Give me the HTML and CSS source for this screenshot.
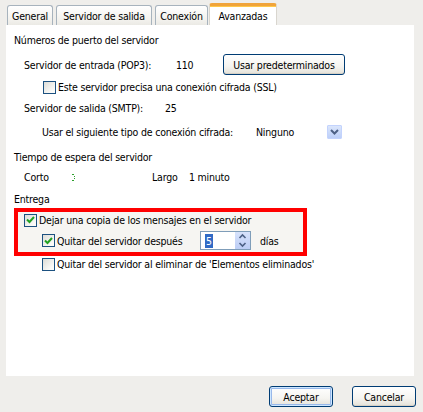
FILE: index.html
```html
<!DOCTYPE html>
<html lang="es">
<head>
<meta charset="utf-8">
<link rel="stylesheet" href="styles.css">
</head>
<body>
<div class="dialog">
  <div class="tabs">
    <div class="tab t-general">General</div>
    <div class="tab t-salida">Servidor de salida</div>
    <div class="tab t-conexion">Conexión</div>
    <div class="tab active t-avanz">Avanzadas</div>
  </div>
  <div class="panel">
    <div class="heading">Números de puerto del servidor</div>
    <div class="row row-pop">
      <span class="lbl-pop">Servidor de entrada (POP3):</span>
      <span class="val-pop">110</span>
      <button class="btn btn-defaults">Usar predeterminados</button>
    </div>
    <div class="row row-ssl">
      <span class="chk"></span>
      <span class="chk-label">Este servidor precisa una conexión cifrada (SSL)</span>
    </div>
    <div class="row row-smtp">
      <span class="lbl-smtp">Servidor de salida (SMTP):</span>
      <span>25</span>
    </div>
    <div class="row row-cifr">
      <span class="lbl-cifr">Usar el siguiente tipo de conexión cifrada:</span>
      <span class="val-cifr">Ninguno</span>
      <span class="dropbtn">
        <svg width="9" height="6" viewBox="0 0 9 6"><path d="M1 1 L4.5 4.5 L8 1" fill="none" stroke="#4d6185" stroke-width="2"/></svg>
      </span>
    </div>
    <div class="heading heading-time">Tiempo de espera del servidor</div>
    <div class="row row-time">
      <span class="lbl-corto">Corto</span>
      <span class="slider-mark">
        <svg width="3" height="7" viewBox="0 0 3 7"><rect x="0" y="0" width="2" height="1" fill="#2da02d"/><rect x="2" y="2" width="1" height="1" fill="#2da02d"/><rect x="2" y="4" width="1" height="1" fill="#2da02d"/><rect x="0" y="6" width="2" height="1" fill="#2da02d"/></svg>
      </span>
      <span class="lbl-largo">Largo</span>
      <span>1 minuto</span>
    </div>
    <div class="heading heading-entrega">Entrega</div>
    <div class="redbox">
      <div class="row row-dejar">
        <span class="chk checked"><svg width="9" height="8" viewBox="0 0 9 8"><path d="M1 3.5 L3.5 6 L8 1" fill="none" stroke="#21a121" stroke-width="2"/></svg></span>
        <span class="chk-label">Dejar una copia de los mensajes en el servidor</span>
      </div>
      <div class="row row-quitar">
        <span class="chk checked"><svg width="9" height="8" viewBox="0 0 9 8"><path d="M1 3.5 L3.5 6 L8 1" fill="none" stroke="#21a121" stroke-width="2"/></svg></span>
        <span class="chk-label lbl-quitar">Quitar del servidor después</span>
        <span class="spinner">
          <span class="spin-val"><span class="sel">5</span></span>
          <span class="spin-btns">
            <svg width="15" height="17" viewBox="0 0 15 17"><path d="M4.5 6 L7.5 3 L10.5 6" fill="none" stroke="#4d6185" stroke-width="1.6"/><path d="M4.5 11 L7.5 14 L10.5 11" fill="none" stroke="#4d6185" stroke-width="1.6"/></svg>
          </span>
        </span>
        <span class="lbl-dias">días</span>
      </div>
    </div>
    <div class="row row-elim">
      <span class="chk"></span>
      <span class="chk-label">Quitar del servidor al eliminar de 'Elementos eliminados'</span>
    </div>
  </div>
  <div class="footer">
    <button class="btn btn-default">Aceptar</button>
    <button class="btn">Cancelar</button>
  </div>
</div>
</body>
</html>
```

FILE: styles.css
```css
html, body {
  margin: 0;
  padding: 0;
}
body {
  background: #efeeeb;
  font-family: "DejaVu Sans Condensed", "DejaVu Sans", sans-serif;
  font-stretch: condensed;
  font-size: 10.5px;
  letter-spacing: -0.2px;
  color: #000;
}
.dialog {
  width: 423px;
  height: 412px;
  background: #efeeeb;
  box-sizing: border-box;
}
.tabs {
  display: flex;
  align-items: flex-end;
  height: 25px;
  padding-left: 7px;
  box-sizing: border-box;
}
.tab {
  box-sizing: border-box;
  height: 20px;
  line-height: 20px;
  text-align: center;
  border: 1px solid #a7b3bd;
  border-bottom: none;
  border-radius: 3px 3px 0 0;
  background: linear-gradient(#ffffff, #f3f2ee 70%, #ebeae5);
  white-space: nowrap;
}
.t-general { width: 46px; margin-right: 3px; }
.t-salida { width: 96px; margin-right: 3px; }
.t-conexion { width: 53px; margin-right: 1px; }
.t-avanz { width: 68px; }
.tab.active {
  height: 22px;
  line-height: 20px;
  background: #fff;
  border: 1px solid #d9d6cf;
  border-top: 3px solid #f0a43a;
  border-bottom: none;
  border-radius: 3px 3px 0 0;
  box-shadow: inset 0 1px 0 #ffc84a;
}
.panel {
  margin-left: 6px;
  width: 408px;
  height: 351px;
  background: #fff;
  box-sizing: border-box;
  padding: 8px 0 0 8px;
}
.heading {
  height: 14px;
  line-height: 14px;
}
.row {
  display: flex;
  align-items: center;
  height: 14px;
  line-height: 14px;
  white-space: nowrap;
}
.row-pop {
  margin-top: 7px;
  height: 21px;
  margin-left: 10px;
}
.lbl-pop { width: 152px; }
.val-pop { width: 47px; }
.btn {
  font-family: inherit;
  font-stretch: condensed;
  font-size: 10.5px;
  letter-spacing: -0.2px;
  color: #000;
  height: 21px;
  padding: 0;
  border: 1px solid #003c74;
  border-radius: 3px;
  background: linear-gradient(#ffffff, #f5f4f0 60%, #e3e1d8);
  box-shadow: inset 0 -1px 0 #d6d0c5;
}
.btn-defaults { width: 122px; }
.row-ssl {
  margin-top: 5px;
  margin-left: 29px;
}
.chk {
  box-sizing: border-box;
  width: 13px;
  height: 13px;
  border: 1px solid #1c5180;
  background: linear-gradient(135deg, #dcdcd7, #fbfbf9 80%);
  display: flex;
  align-items: center;
  justify-content: center;
  flex: none;
}
.chk-label { margin-left: 2px; }
.row-smtp {
  margin-top: 7px;
  margin-left: 10px;
}
.lbl-smtp { width: 141px; }
.row-cifr {
  margin-top: 10px;
  margin-left: 28px;
}
.lbl-cifr { width: 214px; }
.val-cifr { width: 71px; }
.dropbtn {
  box-sizing: border-box;
  width: 15px;
  height: 14px;
  background: linear-gradient(#dbe6fc, #bccff8);
  border: 1px solid #c3d3fd;
  border-radius: 1px;
  display: flex;
  align-items: center;
  justify-content: center;
}
.heading-time { margin-top: 11px; }
.row-time {
  margin-top: 6px;
  margin-left: 10px;
}
.lbl-corto { width: 48px; }
.slider-mark {
  width: 80px;
  display: flex;
  align-items: center;
}
.lbl-largo { width: 37px; }
.heading-entrega { margin-top: 8px; }
.redbox {
  margin-top: 2px;
  width: 293px;
  height: 48px;
  box-sizing: border-box;
  border: 4px solid #ff0000;
  background: #f6f5f2;
  padding: 0 0 2px 6px;
}
.row-dejar {
  height: 14px;
  margin-top: 1px;
}
.row-quitar {
  margin-top: 4px;
  height: 19px;
  margin-left: 18px;
}
.lbl-quitar { width: 143px; }
.spinner {
  box-sizing: border-box;
  width: 51px;
  height: 19px;
  border: 1px solid #7f9db9;
  background: #fff;
  display: flex;
  align-items: stretch;
}
.spin-val {
  flex: 1;
  display: flex;
  align-items: center;
  padding-left: 4px;
}
.sel {
  background: #316ac5;
  color: #fff;
  line-height: 14px;
  padding: 0 1px;
}
.spin-btns {
  width: 15px;
  background: linear-gradient(#d7e2fb, #bccdf5);
  display: flex;
  align-items: center;
  justify-content: center;
}
.lbl-dias { margin-left: 9px; }
.row-elim {
  margin-left: 28px;
  margin-top: 1px;
}
.footer {
  display: flex;
  justify-content: flex-end;
  gap: 19px;
  padding: 10px 7px 0 0;
}
.footer .btn { width: 64px; }
.btn-default {
  box-shadow: inset 0 0 0 1px #cee7ff, inset 0 0 0 2px #98b8ea, inset 0 -1px 0 #6982ee;
}
```
